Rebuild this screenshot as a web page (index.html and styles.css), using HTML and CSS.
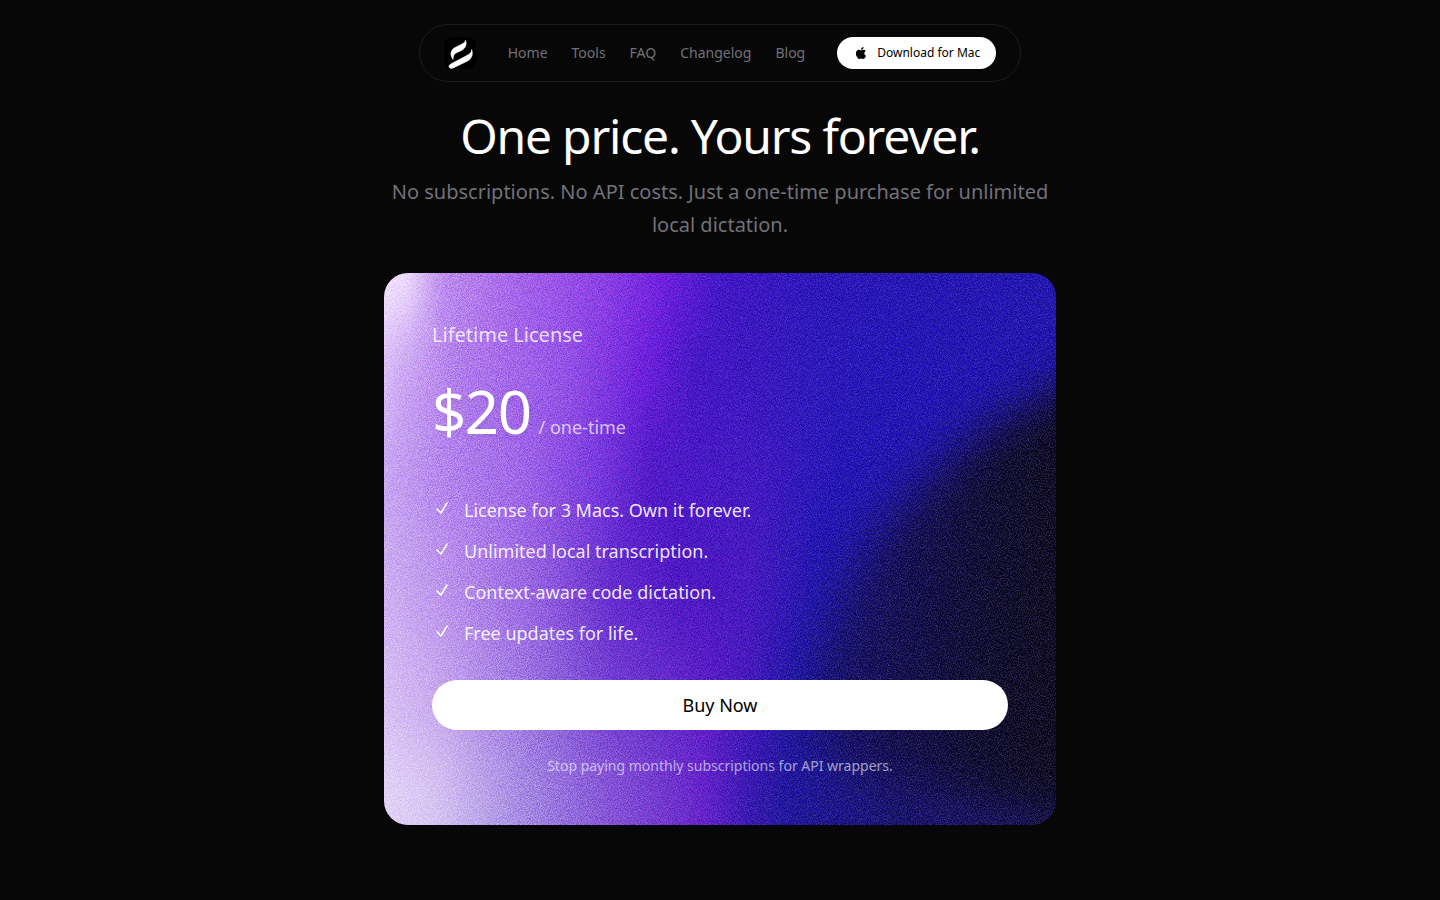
FILE: index.html
```
<!DOCTYPE html>
<html lang="en">
<head>
	<title>Pricing</title>
	<meta charset="utf-8">
	<meta name="viewport" content="width=device-width, initial-scale=1">
	<link rel="stylesheet" href="styles.css">
</head>
<body>

	<header class="header">
		<nav class="nav">
			<a class="logo" href="#" aria-label="Home page">
				<svg viewBox="0 0 32 32" aria-hidden="true">
					<path d="M21.500 3C23 7 22 11 17.500 13.500L12 16C10 17.200 9.100 19 9.100 22.500C6 18.500 6 13.500 10.500 10.800L17.500 7.300C20 6 21.300 5 21.500 3Z"/>
					<path d="M27.700 12.500C29.200 17 28.200 21.500 23.700 24L9.200 31C6.200 32.200 4.200 30.500 5.200 28.500C5.500 27.800 6.200 27.300 7.200 26.800L23.200 18.300C26.200 16.700 27.500 15 27.700 12.500Z"/>
				</svg>
			</a>
			<div class="links">
				<a href="#">Home</a>
				<a href="#">Tools</a>
				<a href="#">FAQ</a>
				<a href="#">Changelog</a>
				<a href="#">Blog</a>
			</div>
			<a class="download" href="#">
				<svg viewBox="0 0 24 24" aria-hidden="true">
					<path d="M17.050 20.280c-.98.95-2.050.8-3.080.35-1.090-.46-2.090-.48-3.240 0-1.440.62-2.200.44-3.060-.35C2.790 15.250 3.510 7.590 9.050 7.310c1.350.07 2.290.74 3.080.8 1.180-.24 2.310-.93 3.570-.84 1.510.12 2.650.72 3.400 1.800-3.120 1.870-2.380 5.980.48 7.130-.57 1.500-1.310 2.990-2.540 4.090zM12.030 7.250c-.15-2.230 1.660-4.070 3.740-4.250.29 2.580-2.340 4.500-3.740 4.250z"/>
				</svg>
				Download for Mac
			</a>
		</nav>
	</header>

	<main class="pricing">
		<h1>One price. Yours forever.</h1>
		<p class="lead">No subscriptions. No API costs. Just a one-time purchase for unlimited local dictation.</p>

		<section class="card">
			<svg class="card-bg" viewBox="0 0 672 552" preserveAspectRatio="none" aria-hidden="true">
				<defs>
					<linearGradient id="g1">
						<stop offset="0" stop-color="#fff6ff"/>
						<stop offset=".06" stop-color="#f8e6fc"/>
						<stop offset=".11" stop-color="#c08eec"/>
						<stop offset=".22" stop-color="#a65ee8"/>
						<stop offset=".34" stop-color="#8a38e2"/>
						<stop offset=".42" stop-color="#6c16dc"/>
						<stop offset=".5" stop-color="#3a0cc0"/>
						<stop offset=".65" stop-color="#200cb0"/>
						<stop offset="1" stop-color="#160ca4"/>
					</linearGradient>
					<linearGradient id="g2">
						<stop offset="0" stop-color="#f2e0fb"/>
						<stop offset=".05" stop-color="#d2acf2"/>
						<stop offset=".13" stop-color="#b47cea"/>
						<stop offset=".28" stop-color="#944ee4"/>
						<stop offset=".39" stop-color="#6a16d8"/>
						<stop offset=".46" stop-color="#3e0cbe"/>
						<stop offset=".62" stop-color="#260eb4"/>
						<stop offset=".75" stop-color="#160cac"/>
						<stop offset="1" stop-color="#140ca0"/>
					</linearGradient>
					<linearGradient id="g3">
						<stop offset="0" stop-color="#d4b4f2"/>
						<stop offset=".1" stop-color="#b888ec"/>
						<stop offset=".22" stop-color="#a062e6"/>
						<stop offset=".33" stop-color="#7430da"/>
						<stop offset=".4" stop-color="#4a0ec2"/>
						<stop offset=".55" stop-color="#380ebc"/>
						<stop offset=".67" stop-color="#180cac"/>
						<stop offset="1" stop-color="#100c98"/>
					</linearGradient>
					<linearGradient id="g4">
						<stop offset="0" stop-color="#d8bcf2"/>
						<stop offset=".12" stop-color="#bc90ea"/>
						<stop offset=".24" stop-color="#965ede"/>
						<stop offset=".35" stop-color="#5c20c8"/>
						<stop offset=".44" stop-color="#460cbe"/>
						<stop offset=".54" stop-color="#400eb8"/>
						<stop offset=".64" stop-color="#160ca4"/>
						<stop offset="1" stop-color="#0c0850"/>
					</linearGradient>
					<linearGradient id="g5">
						<stop offset="0" stop-color="#e2cef4"/>
						<stop offset=".11" stop-color="#caa6ec"/>
						<stop offset=".23" stop-color="#9c70de"/>
						<stop offset=".35" stop-color="#6c34cc"/>
						<stop offset=".48" stop-color="#5412c0"/>
						<stop offset=".54" stop-color="#3c0eb4"/>
						<stop offset=".61" stop-color="#140c9c"/>
						<stop offset=".75" stop-color="#0e0a60"/>
						<stop offset="1" stop-color="#0a0638"/>
					</linearGradient>
					<linearGradient id="g6">
						<stop offset="0" stop-color="#eee2f8"/>
						<stop offset=".1" stop-color="#dccaf0"/>
						<stop offset=".22" stop-color="#a68ce0"/>
						<stop offset=".34" stop-color="#8450d2"/>
						<stop offset=".48" stop-color="#5e18c4"/>
						<stop offset=".54" stop-color="#2e0ea8"/>
						<stop offset=".6" stop-color="#140c90"/>
						<stop offset=".75" stop-color="#0e0a60"/>
						<stop offset="1" stop-color="#0e0a48"/>
					</linearGradient>
					<linearGradient id="shade" x2=".8" y2=".1">
						<stop offset="0" stop-color="#0e0a66" stop-opacity=".6"/>
						<stop offset=".3" stop-color="#0a074a" stop-opacity=".9"/>
						<stop offset=".75" stop-color="#05031c"/>
						<stop offset="1" stop-color="#03020e"/>
					</linearGradient>
					<filter id="mix" x="-10%" y="-30%" width="120%" height="160%" color-interpolation-filters="sRGB">
						<feGaussianBlur stdDeviation="5 34"/>
					</filter>
					<filter id="soft" x="-30%" y="-30%" width="160%" height="160%" color-interpolation-filters="sRGB">
						<feGaussianBlur stdDeviation="24"/>
					</filter>
					<!-- gray grain shows on the light side, tinted grain on the dark side -->
					<filter id="grain" x="0" y="0" width="100%" height="100%" color-interpolation-filters="sRGB">
						<feTurbulence type="fractalNoise" baseFrequency="1.100" numOctaves="2" seed="3"/>
						<feColorMatrix values="0 0 0 1.800 -.4  0 0 0 1.800 -.4  0 0 0 1.800 -.4  0 0 0 0 1"/>
					</filter>
					<filter id="tint" x="0" y="0" width="100%" height="100%" color-interpolation-filters="sRGB">
						<feTurbulence type="fractalNoise" baseFrequency="1.100" numOctaves="2" seed="8"/>
						<feColorMatrix values="0 0 0 0 .62  0 0 0 0 .54  0 0 0 0 1  0 0 0 .75 -.29"/>
					</filter>
				</defs>
				<g filter="url(#mix)">
					<rect x="-20" y="-100" width="712" height="150" fill="url(#g1)"/>
					<rect x="-20" y="50" width="712" height="100" fill="url(#g2)"/>
					<rect x="-20" y="150" width="712" height="100" fill="url(#g3)"/>
					<rect x="-20" y="250" width="712" height="110" fill="url(#g4)"/>
					<rect x="-20" y="360" width="712" height="110" fill="url(#g5)"/>
					<rect x="-20" y="470" width="712" height="180" fill="url(#g6)"/>
				</g>
				<path filter="url(#soft)" fill="url(#shade)" d="M760 75C660 120 580 160 520 230C465 295 435 380 420 460L480 500L760 560Z"/>
				<rect class="grain" width="672" height="552" filter="url(#grain)"/>
				<rect width="672" height="552" filter="url(#tint)"/>
			</svg>

			<h2>Lifetime License</h2>
			<p class="price">$20 <span>/ one-time</span></p>
			<ul class="features">
				<li><svg viewBox="0 0 20 20" aria-hidden="true"><path d="M5 11l4 4 6-10"/></svg>License for 3 Macs. Own it forever.</li>
				<li><svg viewBox="0 0 20 20" aria-hidden="true"><path d="M5 11l4 4 6-10"/></svg>Unlimited local transcription.</li>
				<li><svg viewBox="0 0 20 20" aria-hidden="true"><path d="M5 11l4 4 6-10"/></svg>Context-aware code dictation.</li>
				<li><svg viewBox="0 0 20 20" aria-hidden="true"><path d="M5 11l4 4 6-10"/></svg>Free updates for life.</li>
			</ul>
			<button class="buy" type="button">Buy Now</button>
			<p class="note">Stop paying monthly subscriptions for API wrappers.</p>
		</section>
	</main>

</body>
</html>
```
FILE: styles.css
```
*{
	box-sizing: border-box;
	margin: 0;
	padding: 0;
}
body{
	background: #070707;
	color: #fff;
	font-family: "Noto Sans", sans-serif;
}
a{
	color: inherit;
	text-decoration: none;
}

/* header */
.header{
	display: flex;
	justify-content: center;
	padding-top: 24px;
}
.nav{
	display: flex;
	align-items: center;
	gap: 32px;
	padding: 12px 24px;
	border: 1px solid #1b1b1c;
	border-radius: 32px;
}
.logo{
	width: 32px;
	height: 32px;
	border-radius: 8px;
	background: #000;
}
.logo svg{
	display: block;
	fill: #fff;
	stroke: #fff;
	stroke-width: .5;
}
.links{
	display: flex;
	gap: 24px;
	font-size: 14px;
	line-height: 20px;
	color: #71717a;
}
.download{
	display: flex;
	align-items: center;
	gap: 8px;
	height: 32px;
	padding: 0 16px;
	border-radius: 16px;
	background: #fff;
	color: #000;
	font-size: 12px;
	line-height: 16px;
}
.download svg{
	width: 16px;
	height: 16px;
}

/* pricing */
.pricing{
	max-width: 672px;
	margin: 0 auto;
	padding: 30px 0 64px;
	text-align: center;
}
.pricing h1{
	font-size: 48px;
	line-height: 48px;
	font-weight: 400;
	letter-spacing: -0.025em;
}
.lead{
	margin: 15px 0 32px;
	font-size: 20px;
	line-height: 33px;
	color: #71717a;
}
.card{
	position: relative;
	overflow: hidden;
	isolation: isolate;
	padding: 48px;
	border-radius: 24px;
	text-align: left;
}
/* sits behind the card content */
.card-bg{
	position: absolute;
	inset: 0;
	z-index: -1;
	width: 100%;
	height: 100%;
}
.grain{
	mix-blend-mode: overlay;
	opacity: .35;
}
.card h2{
	font-size: 20px;
	line-height: 28px;
	font-weight: 400;
	color: rgba(255,255,255,.8);
}
.price{
	margin: 32px 0 39px;
	font-size: 60px;
	line-height: 60px;
	letter-spacing: -0.025em;
	text-shadow: 0 2px 4px rgba(0,0,0,.08);
}
.price span{
	margin-left: -6px;
	font-size: 18px;
	letter-spacing: 0;
	color: rgba(255,255,255,.7);
	text-shadow: none;
}
.features{
	display: grid;
	gap: 12px;
	list-style: none;
	font-size: 18px;
	line-height: 29px;
	color: rgba(255,255,255,.9);
}
.features li{
	display: flex;
	gap: 12px;
}
.features svg{
	flex: none;
	width: 20px;
	height: 20px;
	margin-top: 2px;
	fill: none;
	stroke: #fff;
	stroke-width: 1.5;
	stroke-linecap: round;
	stroke-linejoin: round;
}
.buy{
	display: block;
	width: 100%;
	height: 50px;
	margin: 32px 0 24px;
	border: 0;
	border-radius: 25px;
	background: #fff;
	color: #000;
	font: 18px "Noto Sans", sans-serif;
	cursor: pointer;
}
.note{
	font-size: 14px;
	line-height: 23px;
	text-align: center;
	color: rgba(255,255,255,.6);
}
```
